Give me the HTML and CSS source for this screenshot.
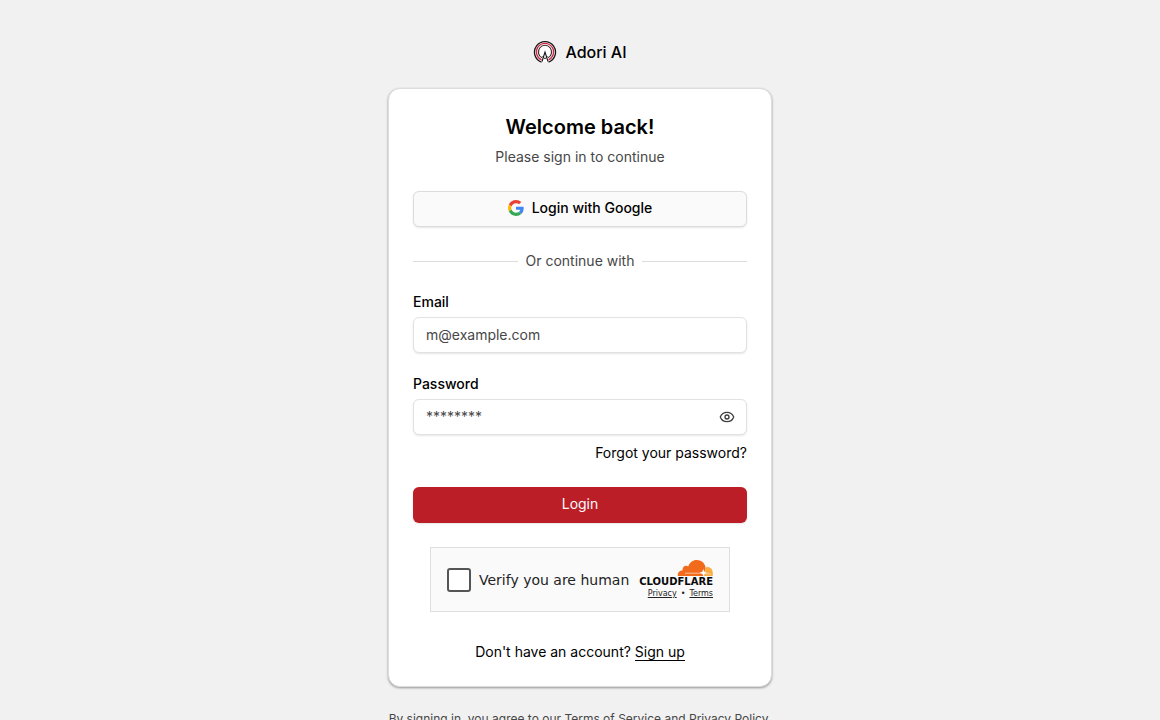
FILE: index.html
```html
<!DOCTYPE html>
<html lang="en">
<head>
    <meta charset="UTF-8">
    <meta name="viewport" content="width=device-width, initial-scale=1.0">
    <title>Login - Adori AI</title>
    <link rel="stylesheet" href="styles.css">
</head>
<body>
    <main class="page">
        <!-- Brand -->
        <a class="brand" href="#">
            <svg class="brand-logo" viewBox="0 0 24 24" fill="none" aria-hidden="true">
                <path d="M8.500 22.100A10.500 10.500 0 1 1 15.500 22.100" fill="#fff" stroke="#1b1416" stroke-width="1.300"/>
                <path d="M8.500 19.800A8.600 8.600 0 1 1 15.500 19.800" stroke="#c8304a" stroke-width="1.300"/>
                <path d="M9 17.800A6.600 6.600 0 1 1 15 17.800" stroke="#3a2024" stroke-width="1.100"/>
                <path d="M9 21.500L12 12L15 21.500" stroke="#1b1416" stroke-width="1.100"/>
                <path d="M9.500 16L12 19L14.500 16" stroke="#1b1416" stroke-width="0.800"/>
            </svg>
            <span>Adori AI</span>
        </a>

        <!-- Login Card -->
        <section class="card">
            <header class="card-header">
                <h1>Welcome back!</h1>
                <p>Please sign in to continue</p>
            </header>

            <form class="login-form">
                <button type="button" class="btn btn-google">
                    <svg width="16" height="16" viewBox="0 0 48 48" aria-hidden="true">
                        <path fill="#EA4335" d="M24 9.500c3.540 0 6.710 1.220 9.210 3.600l6.850-6.850C35.900 2.380 30.470 0 24 0 14.620 0 6.510 5.380 2.560 13.220l7.980 6.190C12.430 13.720 17.740 9.500 24 9.500z"/>
                        <path fill="#4285F4" d="M46.980 24.550c0-1.570-.15-3.090-.38-4.550H24v9.020h12.940c-.58 2.960-2.260 5.480-4.780 7.180l7.730 6c4.510-4.180 7.090-10.360 7.090-17.650z"/>
                        <path fill="#FBBC05" d="M10.530 28.590c-.48-1.450-.76-2.990-.76-4.590s.27-3.140.76-4.590l-7.980-6.190C.92 16.460 0 20.120 0 24c0 3.880.92 7.540 2.560 10.780l7.970-6.190z"/>
                        <path fill="#34A853" d="M24 48c6.480 0 11.930-2.130 15.890-5.810l-7.730-6c-2.150 1.450-4.920 2.300-8.160 2.300-6.260 0-11.570-4.220-13.470-9.910l-7.980 6.190C6.510 42.620 14.620 48 24 48z"/>
                    </svg>
                    Login with Google
                </button>

                <div class="divider"><span>Or continue with</span></div>

                <div class="field">
                    <label for="email">Email</label>
                    <input type="email" id="email" name="email" placeholder="m@example.com" required>
                </div>

                <div class="field">
                    <label for="password">Password</label>
                    <div class="password-box">
                        <input type="password" id="password" name="password" placeholder="********" required>
                        <button type="button" class="toggle" aria-label="Show password">
                            <svg width="16" height="16" viewBox="0 0 24 24" fill="none" stroke="currentColor" stroke-width="2" stroke-linecap="round" stroke-linejoin="round" aria-hidden="true">
                                <path d="M2.062 12.348a1 1 0 0 1 0-.696 10.750 10.750 0 0 1 19.876 0 1 1 0 0 1 0 .696 10.750 10.750 0 0 1-19.876 0"/>
                                <circle cx="12" cy="12" r="3"/>
                            </svg>
                        </button>
                    </div>
                    <a class="forgot" href="#">Forgot your password?</a>
                </div>

                <button type="submit" class="btn btn-primary">Login</button>

                <!-- Human Verification -->
                <div class="captcha">
                    <label class="captcha-check">
                        <input type="checkbox" name="human">
                        <span>Verify you are human</span>
                    </label>
                    <div class="captcha-brand">
                        <svg width="36" height="16" viewBox="0 0 36 16" aria-hidden="true">
                            <path fill="#f26a1b" d="M.8 16C.5 12.800 2.500 10.400 5.700 10.200C5 7 8.500 4.600 11.300 6.500C12.600 2.500 15.800 0 19.800 0C25.200 0 28.500 4.100 28.700 8.500L26.800 14L26 16z"/>
                            <path fill="#fbad41" d="M27 16L28.700 8.500C29.200 7 30.300 6.800 31 7C34.500 7.300 36.500 11 35.700 16z"/>
                            <path d="M8 13.200H24L34 14" fill="none" stroke="#fde3cf" stroke-width="0.700"/>
                            <path fill="#fff" d="M26.300 9L27.300 11.700L30 12.700L27.300 13.700L26.300 16L25.300 13.700L22.600 12.700L25.300 11.700z"/>
                        </svg>
                        <span class="captcha-name">CLOUDFLARE</span>
                        <div class="captcha-links">
                            <a href="#">Privacy</a>
                            <span>•</span>
                            <a href="#">Terms</a>
                        </div>
                    </div>
                </div>

                <p class="signup">Don't have an account? <a href="#">Sign up</a></p>
            </form>
        </section>

        <p class="terms">By signing in, you agree to our <a href="#">Terms of Service</a> and <a href="#">Privacy Policy</a>.</p>
    </main>
</body>
</html>
```

FILE: styles.css
```css
/* Base Styles */
* {
    box-sizing: border-box;
}

body {
    margin: 0;
    background-color: #f1f1f1;
    color: #000;
    font-family: Inter, sans-serif;
    font-size: 14px;
    line-height: 20px;
}

h1, p {
    margin: 0;
}

a {
    color: inherit;
    text-decoration: none;
}

button, input {
    font: inherit;
    color: inherit;
}

.page {
    display: flex;
    flex-direction: column;
    gap: 24px;
    width: 100%;
    max-width: 384px;
    margin: 0 auto;
    padding: 40px 0;
}

/* Brand */
.brand {
    display: flex;
    align-items: center;
    align-self: center;
    gap: 8px;
    font-size: 16px;
    line-height: 24px;
    font-weight: 500;
}

.brand-logo {
    width: 24px;
    height: 24px;
}

/* Card */
.card {
    padding: 24px;
    background-color: #fff;
    border: 1px solid #dcdcdc;
    border-radius: 12px;
    box-shadow: 0 1px 3px rgba(0, 0, 0, 0.2), 0 1px 2px rgba(0, 0, 0, 0.2);
}

.card-header {
    display: flex;
    flex-direction: column;
    gap: 6px;
    margin-bottom: 24px;
    text-align: center;
}

.card-header h1 {
    font-size: 20px;
    line-height: 28px;
    font-weight: 600;
}

.card-header p {
    color: #474747;
}

.login-form {
    display: flex;
    flex-direction: column;
    gap: 24px;
}

/* Buttons */
.btn {
    display: flex;
    align-items: center;
    justify-content: center;
    gap: 8px;
    height: 36px;
    padding: 0 16px 2px;
    border: 0;
    border-radius: 6px;
    font-weight: 500;
    cursor: pointer;
}

.btn-google {
    background-color: #fafafa;
    border: 1px solid #dcdcdc;
    box-shadow: 0 1px 2px rgba(0, 0, 0, 0.1);
}

.btn-primary {
    background-color: #bc1e28;
    color: #fafafa;
    font-weight: 400;
    box-shadow: 0 1px 2px rgba(0, 0, 0, 0.1);
}

/* Divider */
.divider {
    display: flex;
    align-items: center;
    gap: 8px;
    color: #474747;
}

.divider::before,
.divider::after {
    content: "";
    flex: 1;
    height: 1px;
    background-color: #dcdcdc;
}

/* Fields */
.field {
    display: flex;
    flex-direction: column;
    gap: 8px;
}

.field label {
    line-height: 14px;
    font-weight: 500;
}

.field input {
    display: block;
    width: 100%;
    height: 36px;
    padding: 0 12px 2px;
    background-color: #fff;
    border: 1px solid #e2e2e2;
    border-radius: 6px;
    box-shadow: 0 1px 2px rgba(0, 0, 0, 0.1);
}

.field input::placeholder {
    color: #474747;
    opacity: 1;
}

.password-box {
    position: relative;
}

.toggle {
    position: absolute;
    top: 0;
    right: 0;
    display: flex;
    align-items: center;
    height: 36px;
    padding: 0 12px;
    background: none;
    border: 0;
    color: #3f3f3f;
    cursor: pointer;
}

.forgot {
    align-self: flex-end;
}

/* Human Verification */
.captcha {
    display: flex;
    align-items: center;
    justify-content: space-between;
    align-self: center;
    width: 300px;
    height: 65px;
    padding: 0 16px;
    background-color: #fafafa;
    border: 1px solid #dedede;
    color: #232323;
    font-family: "DejaVu Sans", sans-serif;
}

.captcha-check {
    display: flex;
    align-items: center;
    gap: 8px;
}

.captcha-check input {
    appearance: none;
    width: 24px;
    height: 24px;
    margin: 0;
    background-color: #fff;
    border: 2px solid #555;
    border-radius: 3px;
}

.captcha-brand {
    display: flex;
    flex-direction: column;
    align-items: flex-end;
    color: #0a0a0a;
}

.captcha-name {
    font-size: 10px;
    line-height: 12px;
    font-weight: 700;
}

.captcha-links {
    display: flex;
    gap: 4px;
    font-size: 8px;
    line-height: 12px;
    color: #232323;
}

.captcha-links a {
    text-decoration: underline;
}

/* Footer Text */
.signup {
    margin-top: 6px;
    text-align: center;
}

.signup a {
    border-bottom: 1px solid #000;
}

.terms {
    color: #474747;
    font-size: 12px;
    line-height: 16px;
    text-align: center;
}
```
